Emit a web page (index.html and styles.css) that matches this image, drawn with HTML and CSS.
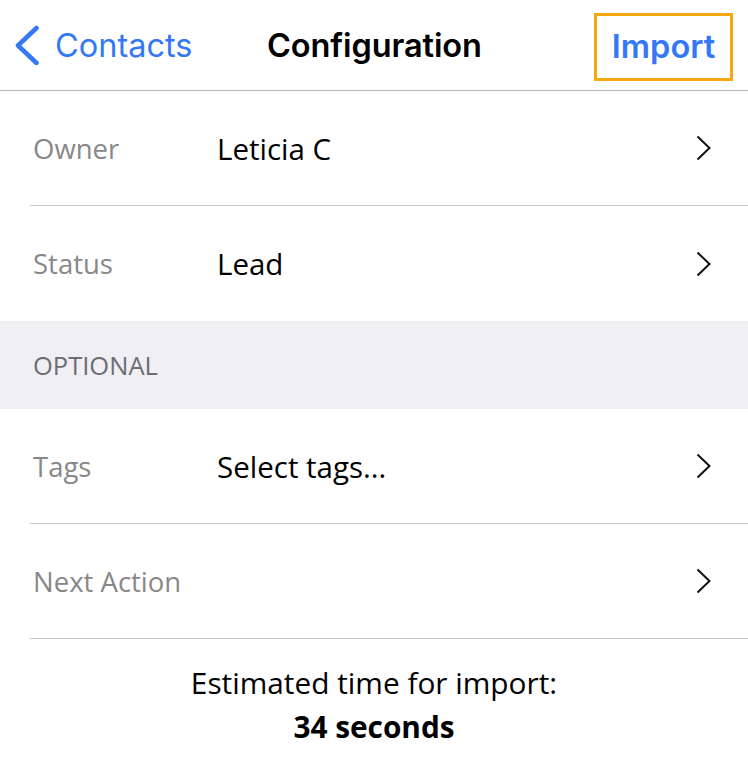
FILE: index.html
```html
<!DOCTYPE html>
<html>
<head>
<meta charset="utf-8">
<link rel="stylesheet" href="styles.css">
</head>
<body>
<div class="screen">
  <header class="nav">
    <div class="back">
      <svg class="back-chev" width="26" height="40" viewBox="0 0 26 40"><path d="M22.5 3 L4 20.5 L22.5 38" fill="none" stroke="#3478f6" stroke-width="4.5" stroke-linecap="round" stroke-linejoin="round"/></svg>
      <span>Contacts</span>
    </div>
    <div class="title">Configuration</div>
    <div class="import">Import</div>
  </header>
  <div class="group">
    <div class="row"><span class="label">Owner</span><span class="value">Leticia C</span><svg class="chev" width="16" height="26" viewBox="0 0 16 26"><path d="M1.5 1.5 L13.5 13 L1.5 24.5" fill="none" stroke="#111" stroke-width="2"/></svg></div>
    <div class="row last"><span class="label">Status</span><span class="value">Lead</span><svg class="chev" width="16" height="26" viewBox="0 0 16 26"><path d="M1.5 1.5 L13.5 13 L1.5 24.5" fill="none" stroke="#111" stroke-width="2"/></svg></div>
  </div>
  <div class="section">OPTIONAL</div>
  <div class="group">
    <div class="row"><span class="label">Tags</span><span class="value">Select tags...</span><svg class="chev" width="16" height="26" viewBox="0 0 16 26"><path d="M1.5 1.5 L13.5 13 L1.5 24.5" fill="none" stroke="#111" stroke-width="2"/></svg></div>
    <div class="row"><span class="label">Next Action</span><span class="value"></span><svg class="chev" width="16" height="26" viewBox="0 0 16 26"><path d="M1.5 1.5 L13.5 13 L1.5 24.5" fill="none" stroke="#111" stroke-width="2"/></svg></div>
  </div>
  <div class="estimate">
    <div>Estimated time for import:</div>
    <div class="bold">34 seconds</div>
  </div>
</div>
</body>
</html>
```
FILE: styles.css
```css
* { box-sizing: border-box; }
html, body { margin: 0; padding: 0; background: #fff; }
.screen { width: 748px; height: 780px; overflow: hidden; font-family: "Open Sans", sans-serif; }
.nav {
  height: 91px;
  border-bottom: 1.5px solid #b4b4b4;
  display: flex;
  align-items: center;
  font-family: Inter, "Liberation Sans", sans-serif;
  font-size: 32.5px;
  padding: 0 15px 0 14px;
}
.back { display: flex; align-items: center; color: #3478f6; gap: 15px; width: 253px; }
.title { font-weight: 600; color: #000; flex: 1; letter-spacing: -0.1px; }
.import {
  color: #3478f6; font-weight: 600;
  border: 3px solid #f6a80f;
  width: 139px; height: 68px;
  display: flex; align-items: center; justify-content: center;
  margin-top: 3px;
}
.group { padding-left: 30px; }
.row {
  height: 115px;
  display: flex; align-items: center;
  border-bottom: 1.5px solid #c8c8c8;
  padding-right: 36px;
}
.row.last { border-bottom: none; }
.label { width: 187px; padding-left: 3px; color: #888; font-size: 27.5px; }
.value { flex: 1; font-size: 29.5px; color: #000; }
.chev { flex: none; }
.section {
  height: 88px; background: #efeff4; color: #6d6d72;
  font-size: 25.5px; padding-left: 33px;
  display: flex; align-items: center;
}
.estimate { text-align: center; font-size: 29.8px; color: #000; padding-top: 22px; line-height: 44px; }
.bold { font-weight: 700; }
```
